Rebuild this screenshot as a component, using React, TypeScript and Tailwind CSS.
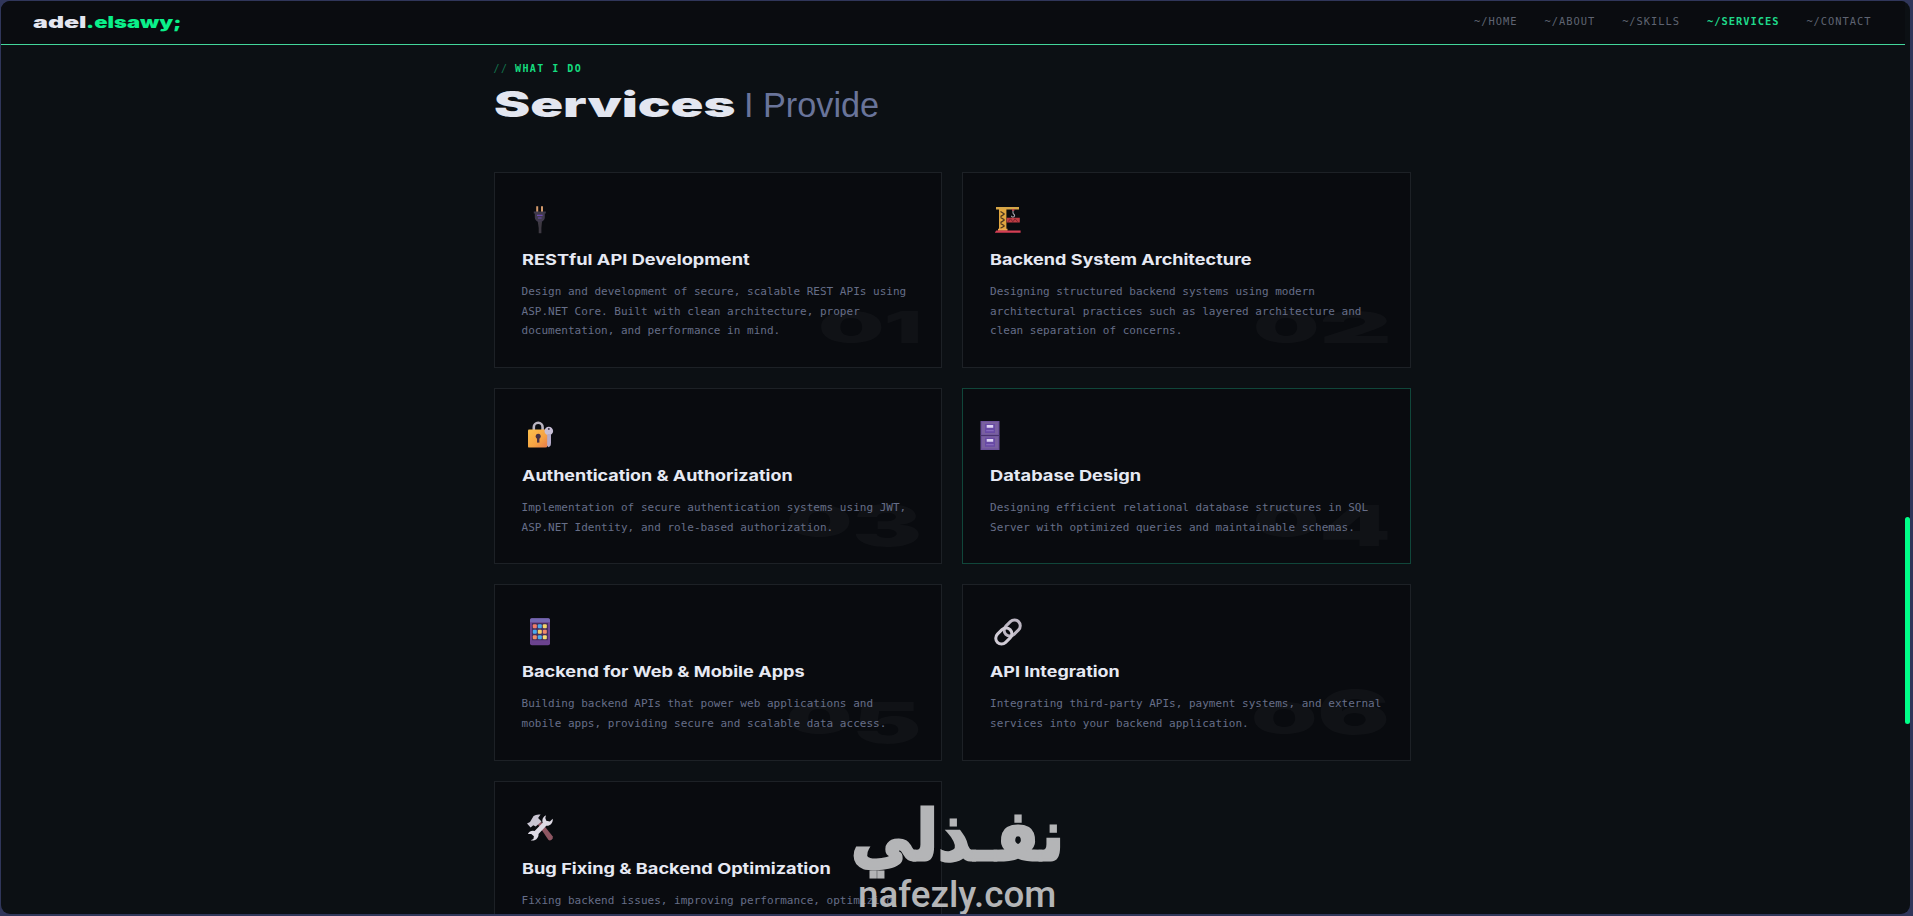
import * as React from "react"
import { clsx } from "clsx"

interface Service {
    title: string
    titleWidth: number
    lines: string[]
    digits: { char: string; width: number; kind: "short" | "drop" | "tall" }[]
    icon: React.ReactNode
    active?: boolean
}

const NAV = ["~/HOME", "~/ABOUT", "~/SKILLS", "~/SERVICES", "~/CONTACT"]

// Stretches its text horizontally until it fills the requested width
function Wide({ width, className, children }: { width: number; className?: string; children: React.ReactNode }) {
    const ref = React.useRef<HTMLSpanElement>(null)
    const [scale, setScale] = React.useState(1)

    React.useLayoutEffect(() => {
        if (ref.current && ref.current.offsetWidth) setScale(width / ref.current.offsetWidth)
    }, [width])

    return (
        <span className="inline-block whitespace-nowrap" style={{ width }}>
            <span ref={ref} className={clsx("inline-block origin-left", className)} style={{ transform: `scaleX(${scale})` }}>
                {children}
            </span>
        </span>
    )
}

function PlugIcon() {
    return (
        <svg viewBox="0 0 28 28" className="size-7">
            <path d="M10.2 0.3h2v6h-2zM15 0.3h2v6h-2z" fill="#d39a6b" />
            <path d="M7.8 5.4h12v2h-1v4.2c0 2-1.5 3.4-3 4.2l-.6 1.2h-2.7l-.7-1.2c-1.5-.8-3-2.2-3-4.2V7.4h-1z" fill="#403a4c" />
            <path d="M11 8.8h5.6v1.3H11zM12 11.4h3.6v1.2H12z" fill="#6b4ab0" />
            <path d="M11.8 16h4.2l-.6 6v5.3h-2.7V22z" fill="#3d3942" />
        </svg>
    )
}

function CraneIcon() {
    return (
        <svg viewBox="0 0 28 28" className="size-7">
            <path d="M2 1h23v2.4H2z" fill="#d6a648" />
            <path d="M5 2.8h7.4v21H5z" fill="#e0a63f" />
            <path d="M6.5 5.5l4 2.5M10.5 8l-4 2.6M6.5 11.5l4 2.3M10.5 14l-4 2.6M6.5 17.5l4 2.3M10.5 20l-4 2.2" stroke="#4b3520" strokeWidth="1.3" />
            <path d="M19 3v4M17.4 9.8c0 1.8 3.2 1.8 3.2-.4 0-1.2-1.6-1.2-1.6-2.6" stroke="#a3a0aa" strokeWidth="1.1" fill="none" />
            <path d="M18 3h2.4v1.7H18z" fill="#c23d4d" />
            <path d="M12.6 11.8h13.2v4.6H12.6z" fill="#bf3c43" />
            <path d="M14 15.8l2.5-3 2.3 3 2.3-3 2.6 3" stroke="#7e2832" strokeWidth="1" fill="none" />
            <path d="M4 22.7h9.5v2H4z" fill="#eba852" />
            <path d="M2.2 24.5h24.4v2.2H.8z" fill="#d63f55" />
        </svg>
    )
}

function LockIcon() {
    return (
        <svg viewBox="0 0 28 28" className="size-7">
            <defs>
                <linearGradient id="lockBody" x1="0" y1="0" x2="1" y2="1">
                    <stop offset="0" stopColor="#fbc04c" />
                    <stop offset="0.6" stopColor="#f6a243" />
                    <stop offset="1" stopColor="#e57a4c" />
                </linearGradient>
            </defs>
            <path d="M7.8 10V6.2a4.4 4.4 0 0 1 8.8 0V10" stroke="#b9b4c0" strokeWidth="2.6" fill="none" />
            <path d="M20.8 12.5h4v4.2l-1 1.2 1 1.3v5l-2 2-2-1.4z" fill="#b5abc8" />
            <path d="M2 9.6q0-1 1-1h18.4v15.8q0 2.2-2.2 2.2H3.2Q2 26.6 2 25.4z" fill="url(#lockBody)" />
            <circle cx="22.8" cy="10" r="4.3" fill="#c7bfd6" />
            <path d="M21.4 13h3.6v9l-1.6 2h-2z" fill="#b5abc8" />
            <circle cx="22.8" cy="8" r="1" fill="#3c3549" />
            <circle cx="12.2" cy="15.2" r="2.5" fill="#453044" />
            <path d="M11 16h2.4v5.6H11z" fill="#453044" />
        </svg>
    )
}

function CabinetIcon() {
    return (
        <svg viewBox="0 0 28 30" className="h-[30px] w-7">
            <path d="M4.5 0h19v29h-19z" fill="#6d519c" />
            <path d="M6 1h16v12.4H6zM6 15.6h16v12H6z" fill="#79609f" />
            <path d="M4.5 14h19v1h-19z" fill="#49346f" />
            <path d="M9 3h10v9H9zM9 16.8h10v9H9z" fill="#684aa5" />
            <path d="M10.7 4h6.5v2.7h-6.5zM10.7 18h6.5v2.7h-6.5z" fill="#ddd3f3" />
            <path d="M10.2 9h7.5v1.3h-7.5zM10.2 23h7.5v1.3h-7.5z" fill="#8668bd" />
        </svg>
    )
}

const APP_COLORS = ["#f27d69", "#4fa8ea", "#f3d56b", "#49a9ed", "#f5cd66", "#f0896b", "#ef8d67", "#4aabea", "#f3dc74"]

function PhoneIcon() {
    return (
        <svg viewBox="0 0 28 28" className="size-7">
            <rect x="4" y="0.2" width="20" height="27" rx="1.8" fill="#6b438f" />
            <path d="M4 2q0-1.8 1.8-1.8h16.4Q24 .2 24 2v2.3H4z" fill="#7468b1" />
            <rect x="6" y="5" width="16" height="17.2" fill="#44305c" />
            {APP_COLORS.map((color, i) => (
                <rect key={i} x={6.8 + (i % 3) * 5} y={6.2 + Math.floor(i / 3) * 5.5} width="4" height="4" rx="1" fill={color} />
            ))}
        </svg>
    )
}

function LinkIcon() {
    return (
        <svg viewBox="0 0 28 28" className="size-7" fill="none" strokeWidth="3">
            <rect x="9.2" y="4.2" width="18" height="11.6" rx="5.8" transform="rotate(-45 18.2 10)" stroke="#bdb7c3" />
            <rect x="0.8" y="12.2" width="18" height="11.6" rx="5.8" transform="rotate(-45 9.8 18)" stroke="#d0cbd5" />
        </svg>
    )
}

function ToolsIcon() {
    return (
        <svg viewBox="0 0 28 28" className="size-7">
            <path d="M11 9l3-2.5 12.6 15.7q1 2-1 3.5t-3.3 0z" fill="#8e5662" />
            <path d="M1 9.5l3-1.6L7.6 2Q10 .1 14.6.6l-2.5 3.3 3.4 3.7-5.8 5-2.4-1.4-2.7 2.4z" fill="#c9c5d2" />
            <path
                d="M20 1.2a6 6 0 0 0-3.3 7.5L8.6 17a6 6 0 0 0-6.7 3.1l3.4-.2 2.6 2.3-.5 2.8-2.7 1.3a6 6 0 0 0 7.8-6.4l7.8-8.1c4 .5 7-3 6.4-7l-2.8 2.8-3.6-.8-1-2.7z"
                fill="#dedae5"
            />
        </svg>
    )
}

const SERVICES: Service[] = [
    {
        title: "RESTful API Development",
        titleWidth: 228,
        lines: ["Design and development of secure, scalable REST APIs using", "ASP.NET Core. Built with clean architecture, proper", "documentation, and performance in mind."],
        digits: [{ char: "0", width: 66, kind: "short" }, { char: "1", width: 38, kind: "short" }],
        icon: <PlugIcon />,
    },
    {
        title: "Backend System Architecture",
        titleWidth: 262,
        lines: ["Designing structured backend systems using modern", "architectural practices such as layered architecture and", "clean separation of concerns."],
        digits: [{ char: "0", width: 66, kind: "short" }, { char: "2", width: 72, kind: "short" }],
        icon: <CraneIcon />,
    },
    {
        title: "Authentication & Authorization",
        titleWidth: 270,
        lines: ["Implementation of secure authentication systems using JWT,", "ASP.NET Identity, and role-based authorization."],
        digits: [{ char: "0", width: 66, kind: "short" }, { char: "3", width: 70, kind: "drop" }],
        icon: <LockIcon />,
    },
    {
        title: "Database Design",
        titleWidth: 151,
        lines: ["Designing efficient relational database structures in SQL", "Server with optimized queries and maintainable schemas."],
        digits: [{ char: "0", width: 66, kind: "short" }, { char: "4", width: 72, kind: "drop" }],
        icon: <CabinetIcon />,
        active: true,
    },
    {
        title: "Backend for Web & Mobile Apps",
        titleWidth: 283,
        lines: ["Building backend APIs that power web applications and", "mobile apps, providing secure and scalable data access."],
        digits: [{ char: "0", width: 66, kind: "short" }, { char: "5", width: 70, kind: "drop" }],
        icon: <PhoneIcon />,
    },
    {
        title: "API Integration",
        titleWidth: 130,
        lines: ["Integrating third-party APIs, payment systems, and external", "services into your backend application."],
        digits: [{ char: "0", width: 66, kind: "short" }, { char: "6", width: 74, kind: "tall" }],
        icon: <LinkIcon />,
    },
    {
        title: "Bug Fixing & Backend Optimization",
        titleWidth: 309,
        lines: ["Fixing backend issues, improving performance, optimizing"],
        digits: [],
        icon: <ToolsIcon />,
    },
]

function ServiceCard({ service }: { service: Service }) {
    return (
        <div className={clsx("relative border bg-[#090b0f] px-[27px] pt-[27px] pb-[26.2px]", service.active ? "border-[#10463a]" : "border-[#1d2126]")}>
            <div className="absolute right-[19px] bottom-[18px] flex items-baseline font-['Inter'] leading-none font-black text-white/[0.03]">
                {service.digits.map((digit) => (
                    <Wide
                        key={digit.char}
                        width={digit.width}
                        className={clsx(
                            digit.kind === "short" && "text-[44px]",
                            digit.kind === "drop" && "translate-y-[9px] text-[57px]",
                            digit.kind === "tall" && "text-[60px]"
                        )}
                    >
                        {digit.char}
                    </Wide>
                ))}
            </div>

            <div className={clsx("h-[50px]", service.active ? "-ml-[14px] pt-[5px]" : "ml-1 pt-[5.5px]")}>{service.icon}</div>
            <h3 className="h-5 font-['Inter'] text-[15px] leading-5 font-bold text-[#e6e9f3]">
                <Wide width={service.titleWidth}>{service.title}</Wide>
            </h3>
            <p className="relative mt-[12px] font-['DejaVu_Sans_Mono',monospace] text-[11px] leading-[19.6px] tracking-[0.01px] whitespace-nowrap text-[#666e88]">
                {service.lines.map((line) => (
                    <span key={line} className="block">{line}</span>
                ))}
            </p>
        </div>
    )
}

export default function App() {
    return (
        <div className="h-[916px] w-[1913px] overflow-hidden bg-[#30365a] pt-px pr-[3px] pb-[2px] pl-px">
            <div className="relative flex h-[913px] flex-col overflow-hidden rounded-[9px] bg-[#0c1014]">
                {/* NAVBAR */}
                <header className="mr-[5px] flex h-11 shrink-0 items-center justify-between border-b border-[#43d69b] bg-[#0a0c10] pr-[33.5px] pb-[2px] pl-8">
                    <div className="flex font-['Inter'] text-base leading-5 font-black">
                        <Wide width={53} className="text-[#e3e5ef]">adel</Wide>
                        <Wide width={96} className="text-[#0af08a]">.elsawy;</Wide>
                    </div>
                    <nav className="flex gap-[27px] font-['DejaVu_Sans_Mono',monospace] text-[10.4px] tracking-[0.98px]">
                        {NAV.map((item) => (
                            <a key={item} className={item === "~/SERVICES" ? "font-bold text-[#1fd98a]" : "text-[#5f6472]"}>{item}</a>
                        ))}
                    </nav>
                </header>

                {/* SERVICES */}
                <main className="mr-[7px] w-[917px] shrink-0 self-center pt-[16px]">
                    <div className="h-4 font-['DejaVu_Sans_Mono',monospace] text-[10px] leading-4 font-bold tracking-[1.45px] text-[#15dd7f]">
                        <span className="mr-[-1px] font-normal text-[#13744e]">//</span> WHAT I DO
                    </div>
                    <h1 className="mt-[7px] flex h-10 items-baseline font-['Inter'] text-[35px] leading-10">
                        <Wide width={242} className="font-black text-[#e3e6f0]">Services</Wide>
                        <span className="ml-[8px] font-['Liberation_Sans'] text-[35px]"><Wide width={135} className="text-[#69749a]">I Provide</Wide></span>
                    </h1>

                    <div className="mt-[48px] grid grid-cols-2 gap-5">
                        {SERVICES.map((service) => (
                            <ServiceCard key={service.title} service={service} />
                        ))}
                    </div>
                </main>

                {/* SCROLLBAR */}
                <div className="absolute top-[516px] right-0 h-[207px] w-[5px] rounded-full bg-[#00ff88]" />

                {/* WATERMARK */}
                <div className="absolute top-[793px] left-[850px] w-[213px] text-[#b4b5b7]">
                    <div className="h-[80px] font-['DejaVu_Sans',sans-serif] text-[70px] leading-[84px] font-bold [-webkit-text-stroke:3px_#b4b5b7]" lang="ar">
                        <Wide width={213}>نفـذلي</Wide>
                    </div>
                    <div className="pl-[7px] font-['Roboto',sans-serif] text-[36px] leading-[42px] font-medium">
                        <Wide width={198}>nafezly.com</Wide>
                    </div>
                </div>
            </div>
        </div>
    )
}
